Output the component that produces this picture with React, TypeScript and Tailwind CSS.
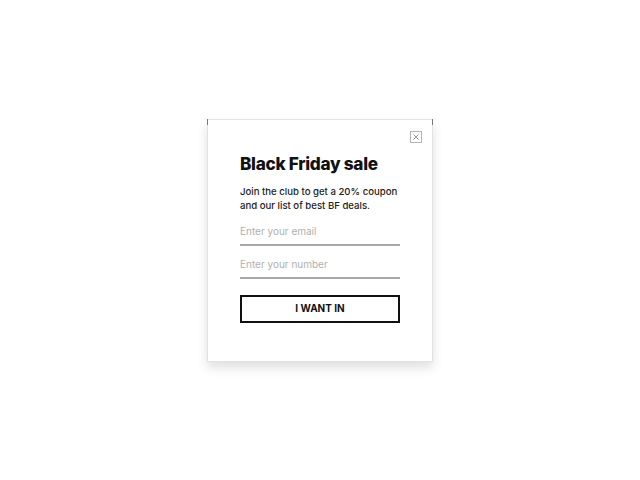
import React from "react";

export default function App() {
  return (
    <div className="w-[640px] h-[480px] bg-white flex items-center justify-center" style={{ fontFamily: "Inter, 'Noto Sans', sans-serif" }}>
      <div className="relative w-[226px] h-[243px] bg-white border border-[#e2e2e2] shadow-[0_6px_10px_rgba(0,0,0,0.12)] flex flex-col pt-[11px] pr-[10px] pl-[32px]">
        <div className="absolute left-[-1px] top-[-1px] w-px h-[6px] bg-[#777]" />
        <div className="absolute right-[-1px] top-[-1px] w-px h-[6px] bg-[#777]" />
        <div className="flex justify-end">
          <button className="w-[12px] h-[12px] border border-[#b5b5b5] flex items-center justify-center">
            <svg width="6" height="6" viewBox="0 0 6 6">
              <path d="M0.5 0.5L5.5 5.5M5.5 0.5L0.5 5.5" stroke="#999" strokeWidth="1" />
            </svg>
          </button>
        </div>
        <div className="w-[160px] flex flex-col">
          <h1 className="mt-[10px] text-[17.2px] leading-[22px] font-extrabold text-[#111] tracking-[-0.3px] whitespace-nowrap">Black Friday sale</h1>
          <p className="mt-[10px] text-[9.6px] leading-[14px] text-[#222] whitespace-nowrap font-medium">
            Join the club to get a 20% coupon
            <br />
            and our list of best BF deals.
          </p>
          <div className="mt-[6px] h-[27px] border-b-2 border-[#a8a8a8] flex items-center text-[10px] text-[#b0b0b0]">Enter your email</div>
          <div className="mt-[6px] h-[27px] border-b-2 border-[#a8a8a8] flex items-center text-[10px] text-[#b0b0b0]">Enter your number</div>
          <button className="mt-[16px] w-full h-[28px] border-2 border-[#111] flex items-center justify-center text-[10px] font-bold text-[#111]">I WANT IN</button>
        </div>
      </div>
    </div>
  );
}
